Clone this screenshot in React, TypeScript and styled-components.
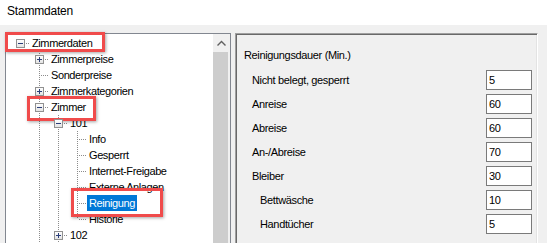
import * as React from 'react';
import styled, { createGlobalStyle } from 'styled-components';

type TreeNode = { label: string; children?: TreeNode[]; open?: boolean; selected?: boolean };

const tree: TreeNode[] = [
  {
    label: 'Zimmerdaten',
    open: true,
    children: [
      { label: 'Zimmerpreise', children: [{ label: '-' }] },
      { label: 'Sonderpreise' },
      { label: 'Zimmerkategorien', children: [{ label: '-' }] },
      {
        label: 'Zimmer',
        open: true,
        children: [
          {
            label: '101',
            open: true,
            children: [
              { label: 'Info' },
              { label: 'Gesperrt' },
              { label: 'Internet-Freigabe' },
              { label: 'Externe Anlagen' },
              { label: 'Reinigung', selected: true },
              { label: 'Historie' },
            ],
          },
          { label: '102', children: [{ label: '-' }] },
          { label: '103', children: [{ label: '-' }] },
        ],
      },
      { label: 'Gruppen', children: [{ label: '-' }] },
    ],
  },
];

const cleaning = [
  { label: 'Nicht belegt, gesperrt', value: '5' },
  { label: 'Anreise', value: '60' },
  { label: 'Abreise', value: '60' },
  { label: 'An-/Abreise', value: '70' },
  { label: 'Bleiber', value: '30' },
  { label: 'Bettwäsche', value: '10', sub: true },
  { label: 'Handtücher', value: '5', sub: true },
];

const GlobalStyle = createGlobalStyle`
  html, body {
    margin: 0;
    padding: 0;
    overflow: hidden;
  }
  body {
    background: #f0f0f0;
    font-family: 'Liberation Sans', Arial, sans-serif;
  }
`;

const Window = styled.div`
  width: 547px;
  height: 243px;
  overflow: hidden;
  display: flex;
  flex-direction: column;
  background: #f0f0f0;
`;

const TitleBar = styled.div`
  flex: none;
  height: 25px;
  box-sizing: border-box;
  padding: 4px 0 0 7px;
  background: #fff;
  color: #000;
  font-size: 12px;
  line-height: 14px;
  letter-spacing: -0.2px;
`;

const Content = styled.div`
  position: relative;
  flex: 1;
  display: flex;
  align-items: flex-start;
  gap: 4px;
  padding: 8px 0 0 5px;
`;

const TreeBox = styled.div`
  width: 226px;
  height: 240px;
  box-sizing: border-box;
  border: 1px solid #828790;
  background: #fff;
  display: flex;
  overflow: hidden;
`;

const TreeList = styled.div`
  flex: 1;
  padding: 1px 0 0 5px;
  font-size: 11px;
  letter-spacing: -0.4px;
  color: #000;
`;

const Row = styled.div`
  display: flex;
  height: 16px;
  white-space: nowrap;
`;

const dotsV = `
  background-image: linear-gradient(to bottom, #8c8c8c 50%, transparent 50%);
  background-size: 1px 2px;
  background-repeat: repeat-y;
`;

const Guide = styled.span<{ $line: boolean }>`
  flex: none;
  width: 19px;
  height: 16px;
  ${p => (p.$line ? dotsV : '')}
  background-position: 9px 0;
`;

const Branch = styled.span<{ $up: boolean; $down: boolean }>`
  position: relative;
  flex: none;
  width: 19px;
  height: 16px;

  &::before {
    content: '';
    position: absolute;
    left: 9px;
    width: 1px;
    top: ${p => (p.$up ? '0' : '8px')};
    bottom: ${p => (p.$down ? '0' : '8px')};
    ${dotsV}
  }

  &::after {
    content: '';
    position: absolute;
    left: 10px;
    right: 0;
    top: 8px;
    height: 1px;
    background-image: linear-gradient(to right, transparent 50%, #8c8c8c 50%);
    background-size: 2px 1px;
    background-repeat: repeat-x;
  }

  svg {
    position: absolute;
    left: 5px;
    top: 4px;
    z-index: 1;
  }
`;

const Label = styled.span<{ $selected?: boolean }>`
  padding: 0 2px;
  height: 16px;
  line-height: 16px;
  background: ${p => (p.$selected ? '#0078d7' : 'transparent')};
  color: ${p => (p.$selected ? '#fff' : '#000')};
`;

const ScrollBar = styled.div`
  flex: none;
  width: 17px;
  display: flex;
  flex-direction: column;
  background: #f0f0f0;
`;

const ScrollButton = styled.div`
  flex: none;
  height: 18px;
  display: flex;
  align-items: center;
  justify-content: center;
`;

const Thumb = styled.div`
  flex: 1;
  margin-right: 2px;
  background: #cdcdcd;
`;

const Panel = styled.div`
  width: 303px;
  height: 240px;
  box-sizing: border-box;
  border: 1px solid;
  border-color: #a0a0a0 #fff transparent #a0a0a0;
  box-shadow: inset 1px 1px 0 #696969, inset -1px 0 0 #e3e3e3;
  padding: 14px 5px 0 8px;
  font-size: 11px;
  letter-spacing: -0.35px;
  color: #000;
`;

const Heading = styled.div`
  line-height: 14px;
  margin-bottom: 8px;
`;

const Fields = styled.div`
  display: flex;
  flex-direction: column;
  gap: 4px;
`;

const Field = styled.label<{ $sub?: boolean }>`
  display: flex;
  align-items: center;
  justify-content: space-between;
  height: 20px;
  padding-left: ${p => (p.$sub ? '16px' : '8px')};
`;

const NumberBox = styled.input`
  width: 46px;
  height: 20px;
  box-sizing: border-box;
  margin: 0;
  border: 1px solid #7a7a7a;
  padding: 0 2px;
  background: #fff;
  font-family: 'Liberation Sans', Arial, sans-serif;
  font-size: 11px;
  letter-spacing: -0.35px;
  color: #000;
  outline: none;
`;

const Marker = styled.div`
  position: absolute;
  box-sizing: border-box;
  border: 3px solid #f04b4b;
  box-shadow: 1px 1px 3px rgba(0, 0, 0, 0.35);
  pointer-events: none;
`;

const Expander: React.FC<{ open: boolean }> = ({ open }) => (
  <svg width="9" height="9" viewBox="0 0 9 9">
    <defs>
      <linearGradient id="exp" x1="0" y1="0" x2="0" y2="1">
        <stop offset="0" stopColor="#ffffff" />
        <stop offset="1" stopColor="#e2e2e2" />
      </linearGradient>
    </defs>
    <rect x="0.5" y="0.5" width="8" height="8" fill="url(#exp)" stroke="#919191" />
    <path d="M2 4.5h5" stroke="#2b3e7a" />
    {!open && <path d="M4.5 2v5" stroke="#2b3e7a" />}
  </svg>
);

type FlatRow = { node: TreeNode; guides: boolean[]; root: boolean; hasNext: boolean };

function flatten(nodes: TreeNode[], guides: boolean[], out: FlatRow[]) {
  nodes.forEach((node, i) => {
    const hasNext = i < nodes.length - 1;
    out.push({ node, guides, root: guides.length === 0, hasNext });
    if (node.open && node.children) flatten(node.children, [...guides, hasNext], out);
  });
  return out;
}

export default function App() {
  const rows = flatten(tree, [], []);
  return (
    <>
      <GlobalStyle />
      <Window>
        <TitleBar>Stammdaten</TitleBar>
        <Content>
          <TreeBox>
            <TreeList>
              {rows.map((r, i) => (
                <Row key={i}>
                  {r.guides.map((g, j) => (
                    <Guide key={j} $line={g} />
                  ))}
                  <Branch $up={!r.root} $down={r.hasNext}>
                    {r.node.children && <Expander open={!!r.node.open} />}
                  </Branch>
                  <Label $selected={r.node.selected}>{r.node.label}</Label>
                </Row>
              ))}
            </TreeList>
            <ScrollBar>
              <ScrollButton>
                <svg width="9" height="6" viewBox="0 0 9 6">
                  <path d="M0.5 5.5L4.5 1.5L8.5 5.5" fill="none" stroke="#606060" strokeWidth="1.4" />
                </svg>
              </ScrollButton>
              <Thumb />
            </ScrollBar>
          </TreeBox>
          <Panel>
            <Heading>Reinigungsdauer (Min.)</Heading>
            <Fields>
              {cleaning.map(f => (
                <Field key={f.label} $sub={f.sub}>
                  {f.label}
                  <NumberBox readOnly defaultValue={f.value} />
                </Field>
              ))}
            </Fields>
          </Panel>
          <Marker style={{ left: 5, top: 7, width: 100, height: 20 }} />
          <Marker style={{ left: 27, top: 71, width: 69, height: 25 }} />
          <Marker style={{ left: 71, top: 163, width: 92, height: 29 }} />
        </Content>
      </Window>
    </>
  );
}
